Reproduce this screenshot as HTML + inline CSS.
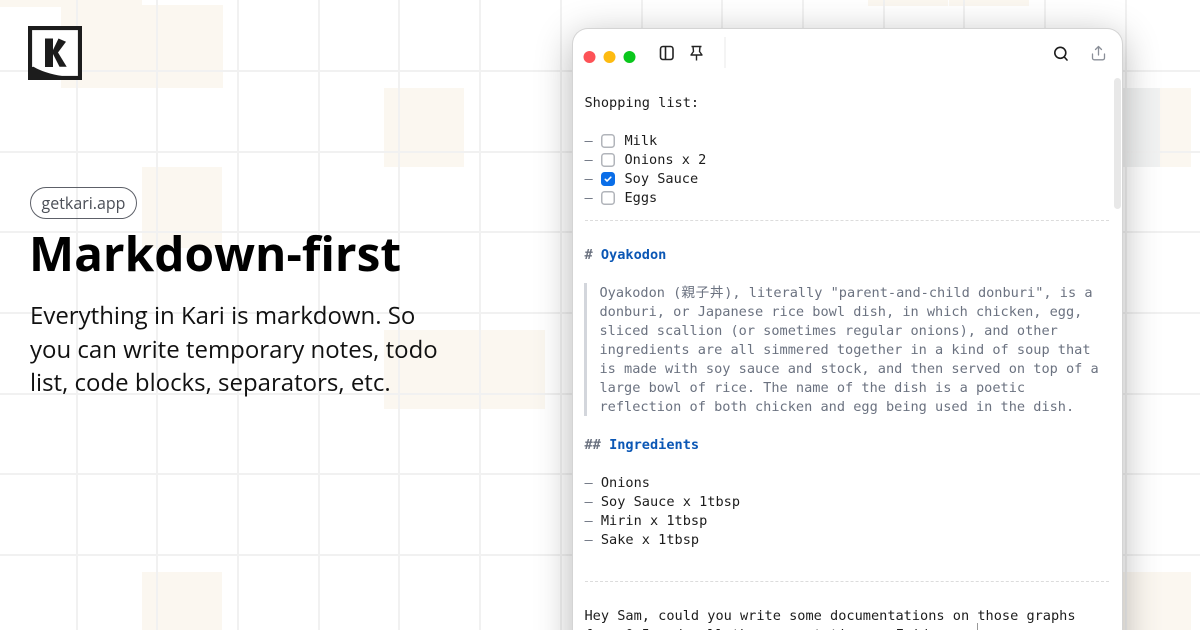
<!DOCTYPE html>
<html><head><meta charset="utf-8"><style>
html,body{margin:0;padding:0;background:#fff}
#p{position:relative;width:1200px;height:630px;overflow:hidden;background:#fff}
.c{position:absolute;background:#fbf7f0}
.gv{position:absolute;top:0;width:2px;height:630px;background:#f1f1f1}
.gh{position:absolute;left:0;height:2px;width:1200px;background:#f1f1f1}
.s{position:absolute;font-family:"Open Sans","Noto Sans","Liberation Sans",sans-serif;white-space:nowrap}
#w{position:absolute;left:573px;top:29px;width:549px;height:640px;background:#fff;border-radius:15px;box-shadow:0 0 0 1px #d4d4d4,0 8px 38px rgba(0,0,0,.3)}
.l{position:absolute;left:584.500px;height:19px;line-height:19px;font-family:"DejaVu Sans Mono","Liberation Mono",monospace;font-size:13.6px;color:#1c1c1c;white-space:pre}
.q{left:599.500px;color:#6b7280}
.d{color:#6b7280}
.b{font-weight:bold;color:#0b57b5}
.h{font-weight:bold;color:#6b7280}
.cb{position:absolute;left:601px;width:14px;height:14px;box-shadow:inset 0 0 0 1.500px #b1b4ba;border-radius:3.500px;background:#fff}
.hr{position:absolute;left:585px;width:524px;height:0;border-top:1px dashed #dcdcdc}
</style></head><body><div id="p">
<div class="c" style="left:0;top:0;width:61px;height:7px"></div>
<div class="c" style="left:61px;top:0;width:81px;height:5px"></div>
<div class="c" style="left:61px;top:5px;width:162px;height:83px"></div>
<div class="c" style="left:384px;top:88px;width:80px;height:79px"></div>
<div class="c" style="left:142px;top:167px;width:80px;height:81px"></div>
<div class="c" style="left:384px;top:330px;width:161px;height:79px"></div>
<div class="c" style="left:142px;top:572px;width:80px;height:58px"></div>
<div class="c" style="left:868px;top:0;width:80px;height:6px"></div>
<div class="c" style="left:949px;top:0;width:80px;height:6px"></div>
<div class="c" style="left:1120px;top:88px;width:71px;height:79px"></div>
<div class="c" style="left:1120px;top:572px;width:71px;height:58px"></div>
<div style="position:absolute;left:1120px;top:88px;width:40px;height:79px;background:#f1f2f2"></div>
<div class="gv" style="left:76px"></div><div class="gv" style="left:156px"></div><div class="gv" style="left:237px"></div><div class="gv" style="left:318px"></div><div class="gv" style="left:398px"></div><div class="gv" style="left:479px"></div><div class="gv" style="left:560px"></div><div class="gv" style="left:641px"></div><div class="gv" style="left:721px"></div><div class="gv" style="left:802px"></div><div class="gv" style="left:883px"></div><div class="gv" style="left:963px"></div><div class="gv" style="left:1044px"></div><div class="gv" style="left:1125px"></div>
<div class="gh" style="top:70px"></div><div class="gh" style="top:151px"></div><div class="gh" style="top:231px"></div><div class="gh" style="top:312px"></div><div class="gh" style="top:393px"></div><div class="gh" style="top:473px"></div><div class="gh" style="top:554px"></div>

<svg style="position:absolute;left:28px;top:26px" width="54" height="54" viewBox="0 0 54 54">
<rect x="2" y="2" width="50" height="50" fill="#fff" stroke="#1c1c1c" stroke-width="4.200"/>
<path d="M4 41L5.500 40.700Q16 47 34 50L4 50Z" fill="#1c1c1c"/>
<rect x="17" y="12.500" width="8" height="28.500" fill="#1c1c1c"/>
<path d="M30.500 12.500L38 15.700L30 26.500L38.700 40.700H31.500L25 28V24Z" fill="#1c1c1c"/>
</svg>

<div class="s" style="left:30px;top:187px;width:105px;height:30px;border:1.2px solid #5d6068;border-radius:16px;text-align:center;line-height:30px;font-size:16px;color:#4b4f57">getkari.app</div>
<div class="s" style="left:29px;top:223px;font-size:47.800px;line-height:62px;font-weight:bold;color:#000">Markdown-first</div>
<div class="s" style="left:30px;top:299px;font-size:24px;line-height:33.500px;color:#111">Everything in Kari is markdown. So<br>you can write temporary notes, todo<br>list, code blocks, separators, etc.</div>

<div id="w"></div>
<svg style="position:absolute;left:573px;top:29px" width="549" height="50" viewBox="573 29 549 50" fill="none">
<circle cx="589.500" cy="57" r="6" fill="#fd5257"/><circle cx="609.500" cy="57" r="6" fill="#fdbb11"/><circle cx="629.500" cy="57" r="6" fill="#0ac71c"/>
<rect x="660.500" y="46.500" width="12.500" height="13" rx="2.500" stroke="#222" stroke-width="1.600"/>
<path d="M665.500 46.500V59.500" stroke="#222" stroke-width="1.600"/>
<path d="M691.500 46.500H701.500M693 46.500L693.500 51.500L691 55H702L699.500 51.500L700 46.500M696.500 55V60.500" stroke="#222" stroke-width="1.400" stroke-linejoin="round"/>
<rect x="724.500" y="37" width="1" height="31" fill="#eaeaea"/>
<circle cx="1060.300" cy="52.800" r="5.500" stroke="#1c1c1c" stroke-width="1.600"/>
<path d="M1064.300 57L1067 60" stroke="#1c1c1c" stroke-width="1.600" stroke-linecap="round"/>
<path d="M1098.500 47V55M1095.500 49.500L1098.500 46.500L1101.500 49.500M1092.500 54V58A1.800 1.800 0 0 0 1094.300 59.800H1102.700A1.800 1.800 0 0 0 1104.500 58V54" stroke="#8a8f98" stroke-width="1.300" stroke-linecap="round" stroke-linejoin="round"/>
</svg>
<div style="position:absolute;left:1114px;top:78px;width:7px;height:131px;border-radius:4px;background:#e8e8e8"></div>

<div class="l" style="top:94px">Shopping list:</div>
<div class="l d" style="top:132px">–</div><div class="cb" style="top:134px"></div><div class="l" style="left:624.500px;top:132px">Milk</div>
<div class="l d" style="top:151px">–</div><div class="cb" style="top:153px"></div><div class="l" style="left:624.500px;top:151px">Onions x 2</div>
<div class="l d" style="top:170px">–</div><div class="cb" style="top:172px;background:#0a6ee8;box-shadow:none"></div>
<svg style="position:absolute;left:601px;top:172px" width="14" height="14" viewBox="0 0 14 14" fill="none"><path d="M4.300 7.300L6.100 9L9.800 5.200" stroke="#fff" stroke-width="1.600" stroke-linecap="round" stroke-linejoin="round"/></svg>
<div class="l" style="left:624.500px;top:170px">Soy Sauce</div>
<div class="l d" style="top:189px">–</div><div class="cb" style="top:191px"></div><div class="l" style="left:624.500px;top:189px">Eggs</div>
<div class="hr" style="top:220px"></div>
<div class="l" style="top:246px"><span class="h"># </span><span class="b">Oyakodon</span></div>
<div style="position:absolute;left:584px;top:283px;width:3px;height:133px;background:#d3d6dc"></div>
<div class="l q" style="top:284px">Oyakodon (<span style="font-family:'Noto Sans CJK JP',sans-serif;letter-spacing:.7px;line-height:0">親子丼</span>), literally "parent-and-child donburi", is a</div>
<div class="l q" style="top:303px">donburi, or Japanese rice bowl dish, in which chicken, egg,</div>
<div class="l q" style="top:322px">sliced scallion (or sometimes regular onions), and other</div>
<div class="l q" style="top:341px">ingredients are all simmered together in a kind of soup that</div>
<div class="l q" style="top:360px">is made with soy sauce and stock, and then served on top of a</div>
<div class="l q" style="top:379px">large bowl of rice. The name of the dish is a poetic</div>
<div class="l q" style="top:398px">reflection of both chicken and egg being used in the dish.</div>
<div class="l" style="top:436px"><span class="h">## </span><span class="b">Ingredients</span></div>
<div class="l" style="top:474px"><span class="d">–</span> Onions</div>
<div class="l" style="top:493px"><span class="d">–</span> Soy Sauce x 1tbsp</div>
<div class="l" style="top:512px"><span class="d">–</span> Mirin x 1tbsp</div>
<div class="l" style="top:531px"><span class="d">–</span> Sake x 1tbsp</div>
<div class="hr" style="top:581px"></div>
<div class="l" style="top:607px">Hey Sam, could you write some documentations on those graphs</div>
<div class="l" style="top:626px">from 0.5 and pull the presentation on Friday</div>
<div style="position:absolute;left:977px;top:623px;width:1px;height:7px;background:#999"></div>
</div></body></html>
